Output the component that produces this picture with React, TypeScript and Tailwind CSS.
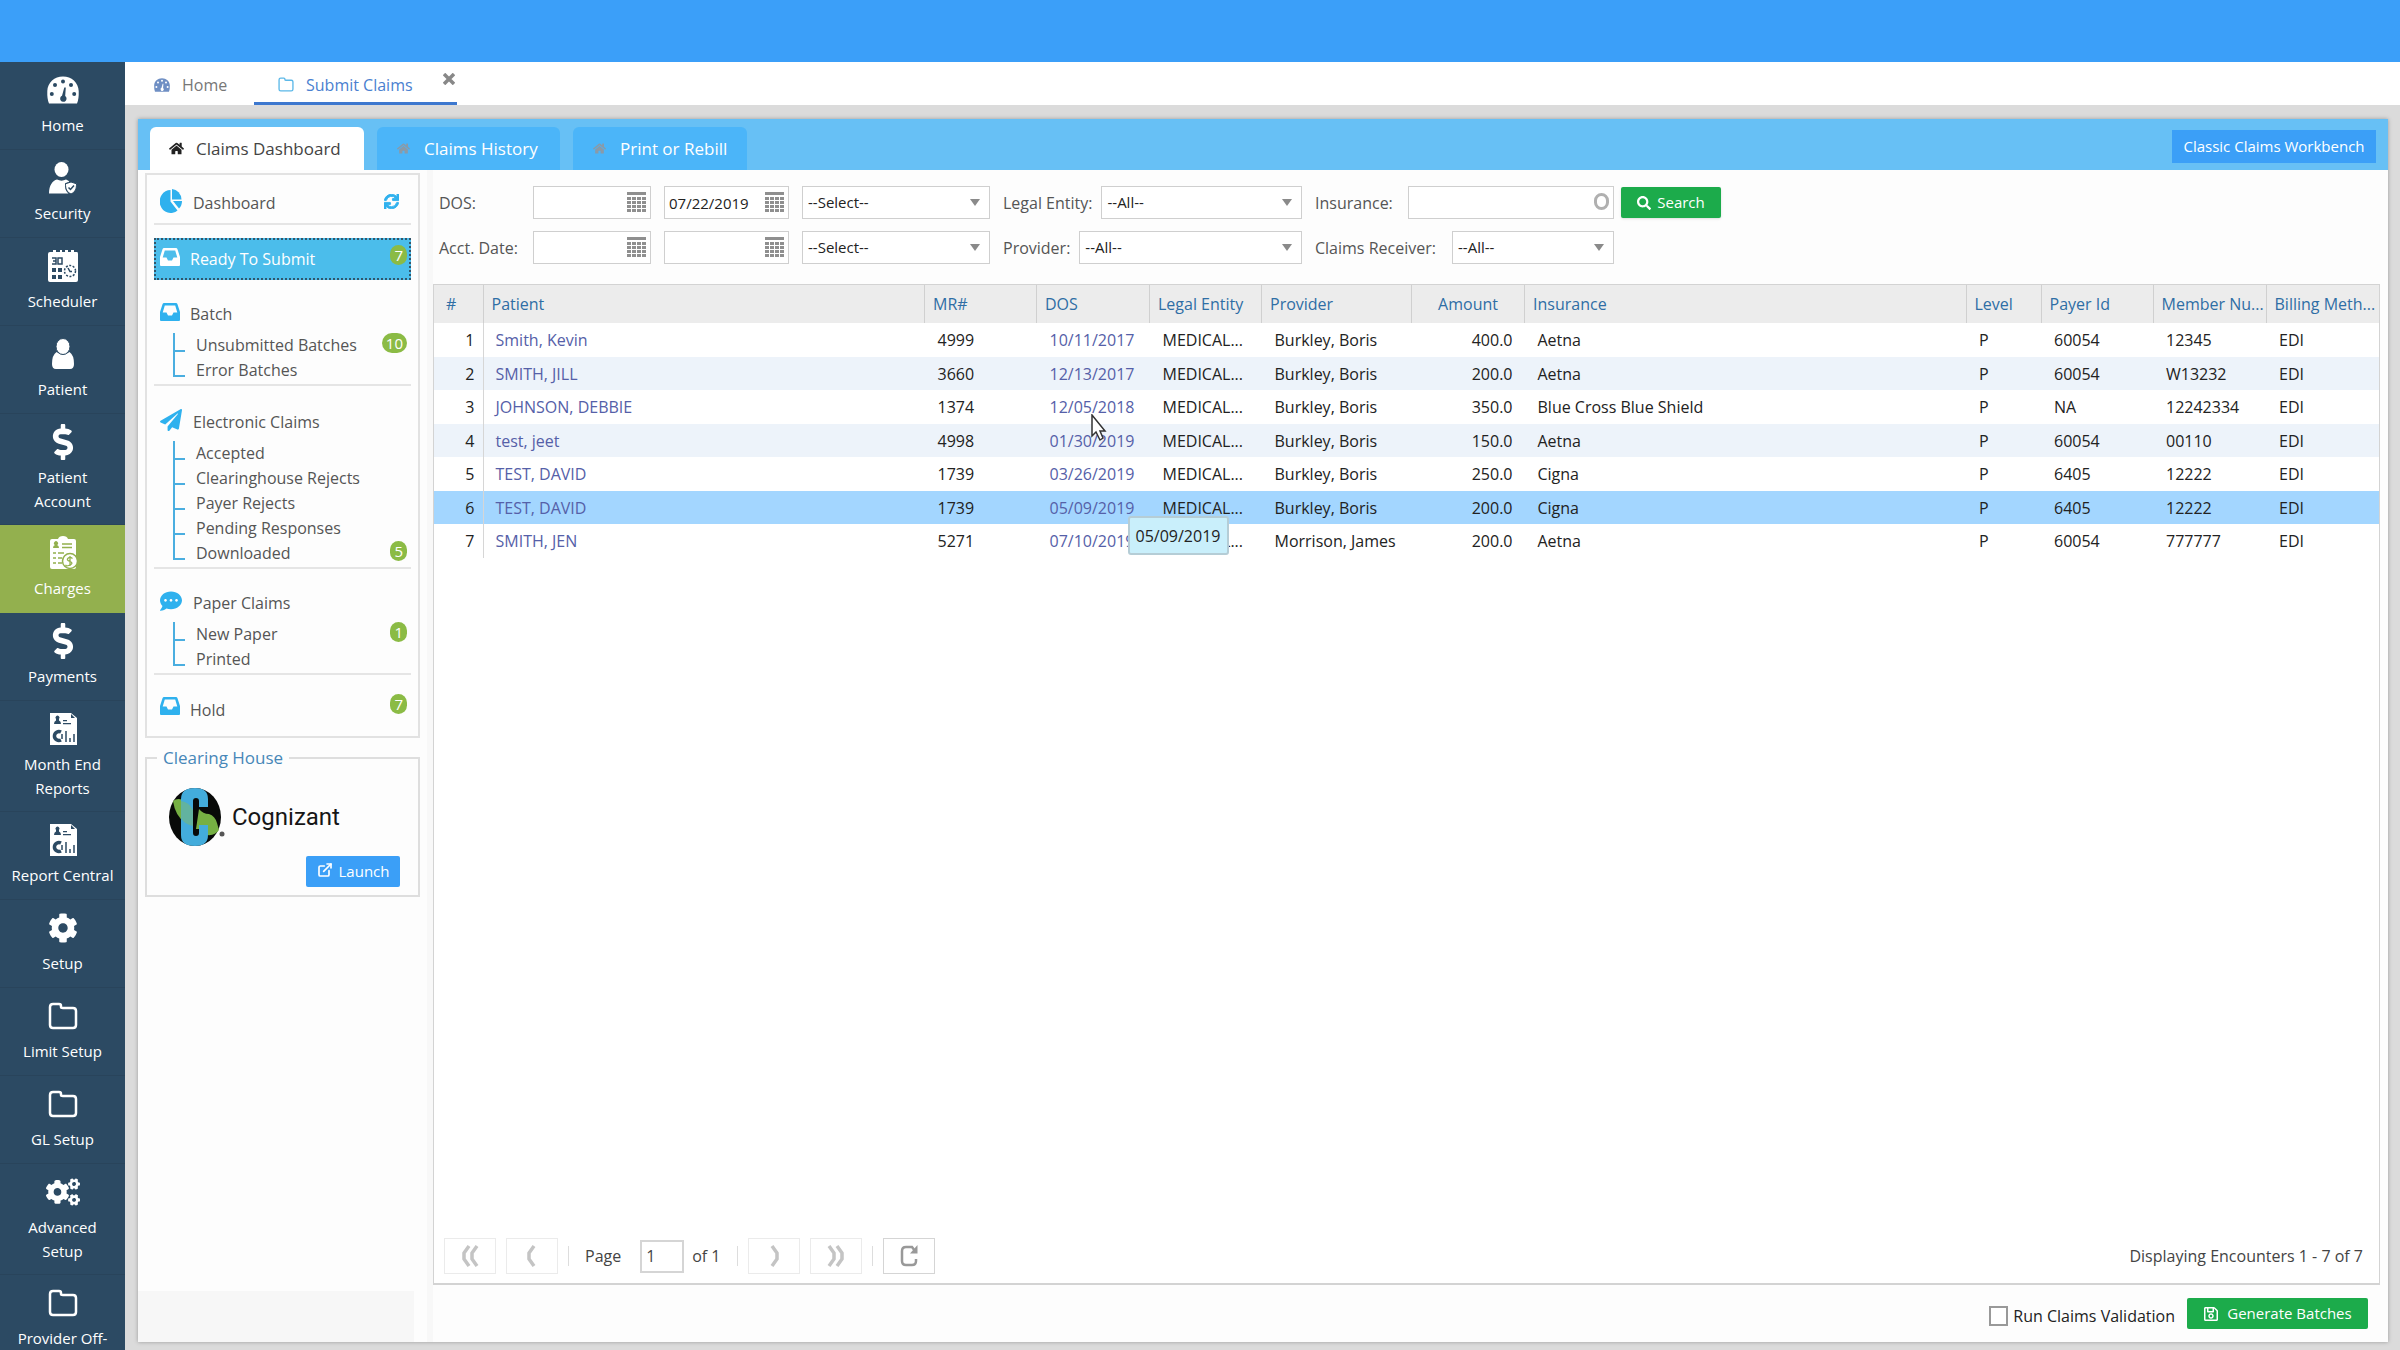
import type { ReactNode } from 'react';
import { ExternalLink } from 'lucide-react';
import { FaCog, FaCogs, FaCommentDots, FaDollarSign, FaHome, FaPaperPlane, FaRegSave, FaSearch, FaSync } from 'react-icons/fa';

const NAVY = '#2c4a63';

function GaugeIcon({ hole = NAVY, className = '' }) {
  return (
    <svg viewBox="0 0 32 28" className={className} fill="currentColor">
      <path d="M2 27.500Q0 23 .3 15C.6 6.500 7.500 .5 16 .5S31.400 6.500 31.700 15Q32 23 30 27.500z" />
      <g fill={hole}>
        <circle cx="16" cy="5.500" r="2" />
        <circle cx="8" cy="9" r="2" />
        <circle cx="24" cy="9" r="2" />
        <circle cx="4.800" cy="18" r="2" />
        <circle cx="27.200" cy="18" r="2" />
        <path d="M17.300 11.500h1.500l-.6 8.500a3.200 3.200 0 1 1-3.200-.3z" />
      </g>
    </svg>
  );
}

function SecurityIcon() {
  return (
    <svg viewBox="0 0 32 32" className="h-8 w-8" fill="currentColor">
      <ellipse cx="14.500" cy="7.500" rx="7" ry="7.500" />
      <path d="M2 31.500c0-8 3.500-13 8-14 3 1.500 6 1.500 9 0 1.500.5 2.500 1.300 3.300 2.300l-4.300 1.500c0 4.500.5 8 3.500 10.200z" />
      <path d="M24 20l5.500 1.800c0 5-1 8-5.500 10.200-4.500-2.200-5.500-5.200-5.500-10.200z" stroke={NAVY} strokeWidth="1" />
      <path d="M21.500 25.500l2 2 3.500-4" fill="none" stroke={NAVY} strokeWidth="1.500" />
    </svg>
  );
}

function SchedulerIcon() {
  return (
    <svg viewBox="0 0 32 34" className="h-[34px] w-8" fill="currentColor">
      <path d="M1 5q0-2 2-2h3V1h3v2h4V1h2v2h3V1h3v2h3V1h3v2h3q1 0 1 2v26q0 2-2 2H3q-2 0-2-2z" />
      <g fill="none" stroke={NAVY} strokeWidth="1.500">
        <path d="M5 9h4v6H5M6 12h3M11 9h4v6h-4z" />
        <circle cx="23" cy="22" r="5.500" strokeDasharray="2 1.500" />
        <path d="M21 19l2 3.500h2" />
      </g>
      <path fill={NAVY} d="M5 19h4v4H5zM11 19h4v4h-4zM5 26h4v4H5zM11 26h4v4h-4z" />
    </svg>
  );
}

function PatientIcon() {
  return (
    <svg viewBox="0 0 24 32" className="h-8 w-6" fill="currentColor">
      <path d="M5.500 14q6.500 5.500 13 0Q23 17 23 26q0 5-4 5H5q-4 0-4-5 0-9 4.500-12z" />
      <ellipse cx="12" cy="8.500" rx="7" ry="8" stroke={NAVY} strokeWidth="1" />
    </svg>
  );
}

function ChargesIcon() {
  return (
    <svg viewBox="0 0 28 34" className="h-[34px] w-7" fill="currentColor">
      <path d="M1 5q0-2 2-2h6q1-3 5-3t5 3h6q2 0 2 2v26q0 2-2 2H3q-2 0-2-2z" />
      <g fill="none" stroke="#93b04e" strokeWidth="1.500">
        <path d="M13 8h10M13 11.500h10M4 17h3M4 22h3M4 27h3M9 17h6M9 22h4M9 27h4" />
        <circle cx="21" cy="25" r="7.500" fill="white" />
        <path d="M23.500 22.500q-2.500-2-4.500-.3t2 3.300-.2 3.500-4-.2M21 20v10" strokeWidth="1.300" />
      </g>
      <path fill="#93b04e" d="M4 12q0-2.500 2-3a2 2 0 1 1 2 0q2 .5 2 3z" />
    </svg>
  );
}

function ReportIcon() {
  return (
    <svg viewBox="0 0 28 34" className="h-[34px] w-7" fill="currentColor">
      <path d="M1 1h21l6 5v27H1z" />
      <path fill={NAVY} d="M5 12q0-3 2-3.500V7a2 2 0 1 1 3 0v1.500q2 .5 2 3.500zM14 8h4v1.300h-4zM14 11h8v1.300h-8zM22 2v4h4z" />
      <path d="M12 20a4.500 4.500 0 1 0 0 8" fill="none" stroke={NAVY} strokeWidth="3.500" />
      <path d="M13 22v5M17 19v11M21 26v4M25 22v8" stroke={NAVY} strokeWidth="1.500" />
    </svg>
  );
}

function FolderIcon({ className = '' }) {
  return (
    <svg viewBox="0 0 30 28" className={className} fill="none" stroke="currentColor" strokeWidth="2.500">
      <path d="M2 5q0-3 3-3h6q2 0 2 2v1q0 1 2 1h10q3 0 3 3v14q0 3-3 3H5q-3 0-3-3z" />
    </svg>
  );
}

function InboxIcon({ className = '' }) {
  return (
    <svg viewBox="0 0 20 18" className={`h-[18px] w-5 ${className}`} fill="currentColor">
      <path fillRule="evenodd" d="M4 0h12q1 0 1.400 1L20 9v8q0 1-1 1H1q-1 0-1-1V9l2.600-8Q3 0 4 0zm.8 2.500L2.700 9.500h3.800l1.500 3h4l1.500-3h3.800l-2.100-7z" />
    </svg>
  );
}

function PieIcon() {
  return (
    <svg viewBox="0 0 22 24" className="h-6 w-[22px]" fill="currentColor">
      <path d="M10.500 1V12.500l7 9A11 11.500 0 1 1 10.500 1z" />
      <path d="M12 0a10 11 0 0 1 9.500 10.500H12z" />
      <path d="M13 12h9q0 4.500-3 7.500z" />
    </svg>
  );
}

function CalendarIcon() {
  return (
    <svg viewBox="0 0 19 20" className="pointer-events-none absolute top-[6px] right-[5px] h-5 w-[19px]" fill="#8f8f8f">
      <path d="M0 0h19v3H0z" />
      {[5, 9, 13, 17].map((y) =>
        [0, 5, 10, 15].map((x) => <rect key={`${x}-${y}`} x={x} y={y} width="4" height="3" />)
      )}
    </svg>
  );
}

function CognizantLogo() {
  return (
    <svg viewBox="0 0 56 60" className="h-[60px] w-14">
      <ellipse cx="26" cy="30" rx="26" ry="29" fill="#080a08" />
      <path d="M4 14q5-4 12 0v22Q6 28 4 14z" fill="#76b043" />
      <path d="M30 22q4 5 10 5 6 2 8 9l2 7q-4 6-12 5l-1-6H27z" fill="#76b043" />
      <path d="M12 12Q12 1 26 1q13 0 13 11v8h-9v-6q0-3-3-3t-3 3v32q0 3 3 3t3-3v-8h9v10q0 11-13 11-14 0-14-11z" fill="#43acdb" />
      <path d="M12 14q8 1 12 9v16q-9-2-12-8z" fill="#62b3a0" />
      <circle cx="53" cy="47" r="2.500" fill="#555" />
    </svg>
  );
}

const navItems: { label: ReactNode; icon: ReactNode; tall?: boolean; active?: boolean }[] = [
  { label: 'Home', icon: <GaugeIcon className="h-7 w-8" /> },
  { label: 'Security', icon: <SecurityIcon /> },
  { label: 'Scheduler', icon: <SchedulerIcon /> },
  { label: 'Patient', icon: <PatientIcon /> },
  { label: <>Patient<br />Account</>, icon: <FaDollarSign className="h-9 w-6" />, tall: true },
  { label: 'Charges', icon: <ChargesIcon />, active: true },
  { label: 'Payments', icon: <FaDollarSign className="h-9 w-6" /> },
  { label: <>Month End<br />Reports</>, icon: <ReportIcon />, tall: true },
  { label: 'Report Central', icon: <ReportIcon /> },
  { label: 'Setup', icon: <FaCog className="h-[30px] w-[30px]" /> },
  { label: 'Limit Setup', icon: <FolderIcon className="h-7 w-[30px]" /> },
  { label: 'GL Setup', icon: <FolderIcon className="h-7 w-[30px]" /> },
  { label: <>Advanced<br />Setup</>, icon: <FaCogs className="h-9 w-[34px]" />, tall: true },
  { label: 'Provider Off-', icon: <FolderIcon className="h-7 w-[30px]" /> },
];

function Sidebar() {
  return (
    <nav className="w-[125px] shrink-0 overflow-hidden bg-[#2c4a63] text-[15px] leading-6 text-white">
      {navItems.map((item, index) => (
        <a
          key={index}
          href="#"
          className={`flex flex-col items-center border-b pt-2 text-center whitespace-nowrap ${item.tall ? 'h-[111px]' : 'h-[88px]'} ${
            item.active ? 'border-[#93b04e] bg-[#93b04e]' : 'border-[#29445b]'
          }`}
        >
          <span className="mb-[3px] flex h-10 shrink-0 items-center">{item.icon}</span>
          {item.label}
        </a>
      ))}
    </nav>
  );
}

function Badge({ children }: { children: ReactNode }) {
  return (
    <span className="ml-auto flex h-5 min-w-4 items-center justify-center rounded-full bg-[#8bbb45] px-1 text-[15px] leading-5 text-white">
      {children}
    </span>
  );
}

function Branch({ items }: { items: { label: string; count?: number }[] }) {
  return (
    <ul className="ml-[19px] text-[16px] leading-[25px]">
      {items.map((item) => (
        <li key={item.label} className="group flex h-[25px] items-start">
          <span className="h-[25px] w-3 shrink-0 border-l-2 border-[#4aaee0] group-last:h-[19px]">
            <span className="block h-[19px] border-b-2 border-[#4aaee0]" />
          </span>
          <a href="#" className="ml-[11px] whitespace-nowrap">{item.label}</a>
          {item.count && <span className="mr-1 ml-auto flex"><Badge>{item.count}</Badge></span>}
        </li>
      ))}
    </ul>
  );
}

function ClaimsTree() {
  return (
    <div className="h-[565px] border-2 border-[#e2e2e2] px-[7px] text-[16px] text-[#555]">
      <div className="flex h-[50px] items-center border-b-2 border-[#e5e5e5] pt-2 pr-3 pl-[6px]">
        <span className="mb-1 text-[#2fb1ee]"><PieIcon /></span>
        <a href="#" className="ml-[11px]">Dashboard</a>
        <button aria-label="Refresh" className="mb-1 ml-auto text-[#2fb1ee]">
          <FaSync className="h-[15px] w-[15px]" stroke="currentColor" strokeWidth="30" />
        </button>
      </div>
      <div className="mt-[13px] flex h-[42px] items-center border-2 border-dotted border-[#31566c] bg-[#4bbdeb] pr-[2px] pl-1 text-white">
        <InboxIcon className="mb-1" />
        <a href="#" className="ml-[10px]">Ready To Submit</a>
        <span className="mb-2 ml-auto flex"><Badge>7</Badge></span>
      </div>
      <div className="h-[106px] border-b-2 border-[#e5e5e5] pt-[21px]">
        <div className="flex h-[26px] items-center pl-[6px]">
          <InboxIcon className="mb-1 text-[#2fb1ee]" />
          <a href="#" className="ml-[10px]">Batch</a>
        </div>
        <div className="pt-[6px]"><Branch items={[{ label: 'Unsubmitted Batches', count: 10 }, { label: 'Error Batches' }]} /></div>
      </div>
      <div className="h-[183px] border-b-2 border-[#e5e5e5] pt-[23px]">
        <div className="flex h-[26px] items-center pl-[6px]">
          <FaPaperPlane className="mb-1 h-[22px] w-[22px] text-[#2fb1ee]" />
          <a href="#" className="ml-[11px]">Electronic Claims</a>
        </div>
        <div className="pt-[6px]">
          <Branch
            items={[
              { label: 'Accepted' },
              { label: 'Clearinghouse Rejects' },
              { label: 'Payer Rejects' },
              { label: 'Pending Responses' },
              { label: 'Downloaded', count: 5 },
            ]}
          />
        </div>
      </div>
      <div className="h-[106px] border-b-2 border-[#e5e5e5] pt-[21px]">
        <div className="flex h-[26px] items-center pl-[6px]">
          <FaCommentDots className="mb-1 h-[22px] w-[22px] text-[#2fb1ee]" />
          <a href="#" className="ml-[11px]">Paper Claims</a>
        </div>
        <div className="pt-[6px]"><Branch items={[{ label: 'New Paper', count: 1 }, { label: 'Printed' }]} /></div>
      </div>
      <div className="mt-[22px] flex h-[26px] items-center pr-1 pl-[6px]">
        <InboxIcon className="mb-2 text-[#2fb1ee]" />
        <a href="#" className="ml-[10px]">Hold</a>
        <span className="mb-3 ml-auto flex"><Badge>7</Badge></span>
      </div>
    </div>
  );
}

function ClearingHouse() {
  return (
    <fieldset className="mt-2 h-[151px] border-2 border-[#dedede] pr-[18px] pl-[22px]">
      <legend className="-ml-3 px-[6px] text-[17px] leading-6 text-[#4787b8]">Clearing House</legend>
      <div className="mt-[17px] flex items-center">
        <CognizantLogo />
        <span className="ml-[7px] font-[Roboto,sans-serif] text-[24px] text-[#161616]">Cognizant</span>
      </div>
      <button className="mt-[9px] ml-auto flex h-[31px] w-[94px] items-center justify-center gap-[6px] rounded-[2px] bg-[#3b9ff7] text-[15px] text-white">
        <ExternalLink className="mb-1 h-4 w-4" strokeWidth={2.500} />
        Launch
      </button>
    </fieldset>
  );
}

function DateField({ id, label, value = '', width }: { id: string; label: string; value?: string; width: string }) {
  return (
    <div className={`relative ${width}`}>
      <input id={id} aria-label={label} defaultValue={value} className="h-[33px] w-full border border-[#cfcfcf] bg-white pr-7 pl-1 text-[15px] text-[#222]" />
      <CalendarIcon />
    </div>
  );
}

function SelectField({ id, label, value, className }: { id: string; label?: string; value: string; className: string }) {
  return (
    <div className={`relative ${className}`}>
      <select id={id} aria-label={label} className="h-[33px] w-full appearance-none border border-[#cfcfcf] bg-white pl-[5px] text-[15px] text-[#222]">
        <option>{value}</option>
      </select>
      <svg viewBox="0 0 10 7" className="pointer-events-none absolute top-[13px] right-[10px] h-[7px] w-[10px]" fill="#8a8a8a">
        <path d="M0 0h10L5 7z" />
      </svg>
    </div>
  );
}

function Filters() {
  return (
    <form className="flex gap-[13px] pt-[16px] pl-[6px] text-[16px] text-[#555]">
      <div className="flex flex-col gap-3">
        <div className="flex items-center gap-[13px]">
          <label htmlFor="dos-from" className="-mr-[13px] w-[94px]">DOS:</label>
          <DateField id="dos-from" label="DOS from" width="w-[118px]" />
          <DateField id="dos-to" label="DOS to" value="07/22/2019" width="w-[125px]" />
          <SelectField id="dos-range" label="DOS range" value="--Select--" className="w-[188px]" />
        </div>
        <div className="flex items-center gap-[13px]">
          <label htmlFor="acct-from" className="-mr-[13px] w-[94px]">Acct. Date:</label>
          <DateField id="acct-from" label="Acct. date from" width="w-[118px]" />
          <DateField id="acct-to" label="Acct. date to" width="w-[125px]" />
          <SelectField id="acct-range" label="Acct. date range" value="--Select--" className="w-[188px]" />
        </div>
      </div>
      <div className="flex w-[299px] flex-col gap-3">
        <div className="flex items-center gap-[9px]">
          <label htmlFor="entity" className="whitespace-nowrap">Legal Entity:</label>
          <SelectField id="entity" value="--All--" className="flex-1" />
        </div>
        <div className="flex items-center gap-[9px]">
          <label htmlFor="provider">Provider:</label>
          <SelectField id="provider" value="--All--" className="flex-1" />
        </div>
      </div>
      <div className="flex w-[299px] flex-col gap-3">
        <div className="flex items-center justify-between">
          <label htmlFor="insurance">Insurance:</label>
          <div className="relative w-[206px]">
            <input id="insurance" className="h-[33px] w-full border border-[#cfcfcf] bg-white px-1" />
            <span className="pointer-events-none absolute top-[7px] right-[5px] h-[17px] w-[15px] rounded-full border-3 border-[#b0b0b0]" />
          </div>
        </div>
        <div className="flex items-center justify-between">
          <label htmlFor="receiver" className="whitespace-nowrap">Claims Receiver:</label>
          <SelectField id="receiver" value="--All--" className="w-[162px]" />
        </div>
      </div>
      <button type="button" className="mt-px -ml-[6px] flex h-[31px] w-[100px] items-center justify-center gap-[6px] rounded-[2px] bg-[#1cab4b] text-[15px] text-white shadow-sm">
        <FaSearch className="h-[14px] w-[14px]" />
        Search
      </button>
    </form>
  );
}

const columns = [
  { name: '#', width: 'w-[49px]', cls: 'pl-3' },
  { name: 'Patient', width: '', cls: 'pl-2' },
  { name: 'MR#', width: 'w-[112px]', cls: 'pl-2' },
  { name: 'DOS', width: 'w-[113px]', cls: 'pl-2' },
  { name: 'Legal Entity', width: 'w-[112px]', cls: 'pl-2' },
  { name: 'Provider', width: 'w-[150px]', cls: 'pl-2' },
  { name: 'Amount', width: 'w-[113px]', cls: 'pr-[26px] text-right' },
  { name: 'Insurance', width: '', cls: 'pl-2' },
  { name: 'Level', width: 'w-[75px]', cls: 'pl-2' },
  { name: 'Payer Id', width: 'w-[112px]', cls: 'pl-2' },
  { name: 'Member Nu...', width: 'w-[113px]', cls: 'pl-2' },
  { name: 'Billing Meth...', width: 'w-[113px]', cls: 'pl-2' },
];

const claims = [
  { patient: 'Smith, Kevin', mr: '4999', dos: '10/11/2017', provider: 'Burkley, Boris', amount: '400.0', insurance: 'Aetna', payer: '60054', member: '12345' },
  { patient: 'SMITH, JILL', mr: '3660', dos: '12/13/2017', provider: 'Burkley, Boris', amount: '200.0', insurance: 'Aetna', payer: '60054', member: 'W13232' },
  { patient: 'JOHNSON, DEBBIE', mr: '1374', dos: '12/05/2018', provider: 'Burkley, Boris', amount: '350.0', insurance: 'Blue Cross Blue Shield', payer: 'NA', member: '12242334' },
  { patient: 'test, jeet', mr: '4998', dos: '01/30/2019', provider: 'Burkley, Boris', amount: '150.0', insurance: 'Aetna', payer: '60054', member: '00110' },
  { patient: 'TEST, DAVID', mr: '1739', dos: '03/26/2019', provider: 'Burkley, Boris', amount: '250.0', insurance: 'Cigna', payer: '6405', member: '12222' },
  { patient: 'TEST, DAVID', mr: '1739', dos: '05/09/2019', provider: 'Burkley, Boris', amount: '200.0', insurance: 'Cigna', payer: '6405', member: '12222' },
  { patient: 'SMITH, JEN', mr: '5271', dos: '07/10/2019', provider: 'Morrison, James', amount: '200.0', insurance: 'Aetna', payer: '60054', member: '777777' },
];

const SELECTED = 5;
const HOVERED = 2;

function ClaimsTable() {
  return (
    <table className="w-full table-fixed border-collapse text-left text-[16px] leading-6 whitespace-nowrap">
      <thead>
        <tr className="h-[38px] bg-[#ececec] text-[#2f6ea5]">
          {columns.map((col) => (
            <th key={col.name} className={`border-r border-[#d0d0d0] font-normal last:border-r-0 ${col.width} ${col.cls}`}>
              {col.name}
            </th>
          ))}
        </tr>
      </thead>
      <tbody className="text-[#222]">
        {claims.map((claim, index) => (
          <tr key={index} className={`odd:h-[34px] even:h-[33px] ${index === SELECTED ? 'bg-[#a3d6ff]' : 'even:bg-[#edf3fa]'}`}>
            <td className="border-r border-[#d6d6d6] pr-2 text-right">{index + 1}</td>
            <td className="pl-3"><a href="#" className="text-[#5560a8]">{claim.patient}</a></td>
            <td className="pl-[13px]">{claim.mr}</td>
            <td className="relative pl-[13px]">
              <a href="#" className="text-[#5560a8]">{claim.dos}</a>
              {index === SELECTED && (
                <div role="tooltip" className="absolute top-[25px] left-[91px] z-10 flex h-[39px] w-[101px] items-center justify-center rounded-[3px] border-2 border-[#b5cdd6] bg-[#c9effb]">
                  {claim.dos}
                </div>
              )}
              {index === HOVERED && (
                <svg viewBox="0 0 16 28" className="absolute top-6 left-[54px] z-10 h-7 w-4" fill="white" stroke="#333" strokeWidth="1.500">
                  <path d="M1 1v21l4-4 4 8 3-2-3-7h5z" />
                </svg>
              )}
            </td>
            <td className="pl-[13px]">MEDICAL...</td>
            <td className="pl-[13px]">{claim.provider}</td>
            <td className="pr-3 text-right">{claim.amount}</td>
            <td className="pl-[13px]">{claim.insurance}</td>
            <td className="pl-[13px]">P</td>
            <td className="pl-[13px]">{claim.payer}</td>
            <td className="pl-[13px]">{claim.member}</td>
            <td className="pl-[13px]">EDI</td>
          </tr>
        ))}
      </tbody>
    </table>
  );
}

function PagerButton({ label, path, className = 'border-[#ebebeb] text-[#c4c4c4]' }: { label: string; path: string; className?: string }) {
  return (
    <button aria-label={label} className={`flex h-9 w-[52px] items-center justify-center border bg-white ${className}`}>
      <svg viewBox="0 0 20 22" className="h-[22px] w-5" fill="none" stroke="currentColor" strokeWidth="3.500">
        <path d={path} />
      </svg>
    </button>
  );
}

function Pager() {
  return (
    <div className="mt-auto flex h-[54px] items-center px-[10px] text-[16px] text-[#444]">
      <div className="flex items-center gap-[10px]">
        <PagerButton label="First page" path="M9 1L4 8v6l5 7M17 1l-5 7v6l5 7" />
        <PagerButton label="Previous page" path="M12 1L7 8v6l5 7" />
        <span className="h-5 w-px bg-[#ddd]" />
      </div>
      <label htmlFor="page" className="mr-[19px] ml-4">Page</label>
      <input id="page" defaultValue="1" className="h-[33px] w-11 border-2 border-[#d5d5d5] pl-1" />
      <span className="mr-[16px] ml-2">of 1</span>
      <div className="flex items-center gap-[10px]">
        <span className="h-5 w-px bg-[#ddd]" />
        <PagerButton label="Next page" path="M8 1l5 7v6l-5 7" />
        <PagerButton label="Last page" path="M3 1l5 7v6l-5 7M11 1l5 7v6l-5 7" />
        <span className="h-5 w-px bg-[#ddd]" />
        <button aria-label="Reload" className="flex h-9 w-[52px] items-center justify-center border border-[#d5d5d5] bg-white text-[#999]">
          <svg viewBox="0 0 20 22" className="h-[22px] w-5" fill="none" stroke="currentColor" strokeWidth="2.500">
            <path d="M17 14v2q0 4-4 4H7q-4 0-4-4V6q0-4 4-4h6l3 4" />
            <path d="M18.500 0v8.500H11z" fill="currentColor" stroke="none" />
          </svg>
        </button>
      </div>
      <span className="mr-[6px] ml-auto">Displaying Encounters 1 - 7 of 7</span>
    </div>
  );
}

function PanelTabs() {
  return (
    <header className="flex h-[51px] shrink-0 items-end bg-[#67c0f5] pr-3 pl-3 text-[17px]">
      <a href="#" className="flex h-[43px] w-[214px] items-center rounded-t-md bg-white pl-[19px] text-[#444]">
        <FaHome className="h-[15px] w-[15px] text-[#222]" />
        <span className="ml-3">Claims Dashboard</span>
      </a>
      <a href="#" className="ml-[13px] flex h-[43px] w-[183px] items-center rounded-t-md bg-[#4bb5f9] pl-5 text-white">
        <FaHome className="h-[13px] w-[13px] text-[#8a9aa8]" />
        <span className="ml-[14px]">Claims History</span>
      </a>
      <a href="#" className="ml-[13px] flex h-[43px] w-[174px] items-center rounded-t-md bg-[#4bb5f9] pl-5 text-white">
        <FaHome className="h-[13px] w-[13px] text-[#8a9aa8]" />
        <span className="ml-[14px]">Print or Rebill</span>
      </a>
      <button className="mb-[7px] ml-auto h-[33px] w-[204px] bg-[#3b9ff7] text-[15px] text-white">Classic Claims Workbench</button>
    </header>
  );
}

export default function App() {
  return (
    <div className="flex h-screen flex-col overflow-hidden font-['Open_Sans',sans-serif]">
      <div className="h-[62px] shrink-0 bg-[#3b9ff9]" />
      <div className="flex min-h-0 flex-1">
        <Sidebar />
        <div className="flex min-w-0 flex-1 flex-col bg-[#dbdbdb]">
          <div className="flex h-[43px] shrink-0 bg-white text-[16px]">
            <a href="#" className="flex w-[129px] items-center pt-[2px] pl-[29px] text-[#777]">
              <GaugeIcon hole="#ffffff" className="h-[14px] w-4 text-[#6f8fc4]" />
              <span className="ml-3">Home</span>
            </a>
            <div className="flex w-[203px] items-center border-b-3 border-[#3d78cf] pt-[5px] pl-6 text-[#4a80d0]">
              <FolderIcon className="h-[15px] w-4 text-[#5bb8e8]" />
              <a href="#" className="ml-3">Submit Claims</a>
              <button aria-label="Close tab" className="mr-[2px] mb-3 ml-auto text-[#888]">
                <svg viewBox="0 0 12 12" className="h-3 w-3" stroke="currentColor" strokeWidth="3.500">
                  <path d="M1 1l10 10M11 1L1 11" />
                </svg>
              </button>
            </div>
          </div>
          <main className="mt-[14px] mr-3 mb-2 ml-[13px] flex min-h-0 flex-1 flex-col bg-[#fdfdfd] shadow-[0_0_4px_#999]">
            <PanelTabs />
            <div className="flex min-h-0 flex-1">
              <aside className="flex w-[289px] shrink-0 flex-col pt-[3px] pr-[6px]">
                <div className="flex flex-1 flex-col pr-px pl-[7px]">
                  <ClaimsTree />
                  <ClearingHouse />
                </div>
                <div className="mr-[7px] h-[51px] bg-[#f7f7f7]" />
              </aside>
              <section className="flex min-w-0 flex-1 flex-col border-l-6 border-[#f8f8f8] pr-[8px]">
                <Filters />
                <div className="mt-[20px] flex min-h-0 flex-1 flex-col border border-b-2 border-[#d3d3d3] bg-white">
                  <ClaimsTable />
                  <Pager />
                </div>
                <footer className="flex h-[57px] shrink-0 items-center justify-end pr-3 text-[16px] text-[#222]">
                  <label className="mr-3 flex items-center gap-[5px] pt-1">
                    <input type="checkbox" className="h-5 w-[19px] appearance-none border-2 border-[#999] bg-white" />
                    Run Claims Validation
                  </label>
                  <button className="flex h-[31px] w-[181px] items-center justify-center gap-2 rounded-[2px] bg-[#1cab4b] text-[15px] text-white">
                    <FaRegSave className="h-4 w-4" />
                    Generate Batches
                  </button>
                </footer>
              </section>
            </div>
          </main>
        </div>
      </div>
    </div>
  );
}
